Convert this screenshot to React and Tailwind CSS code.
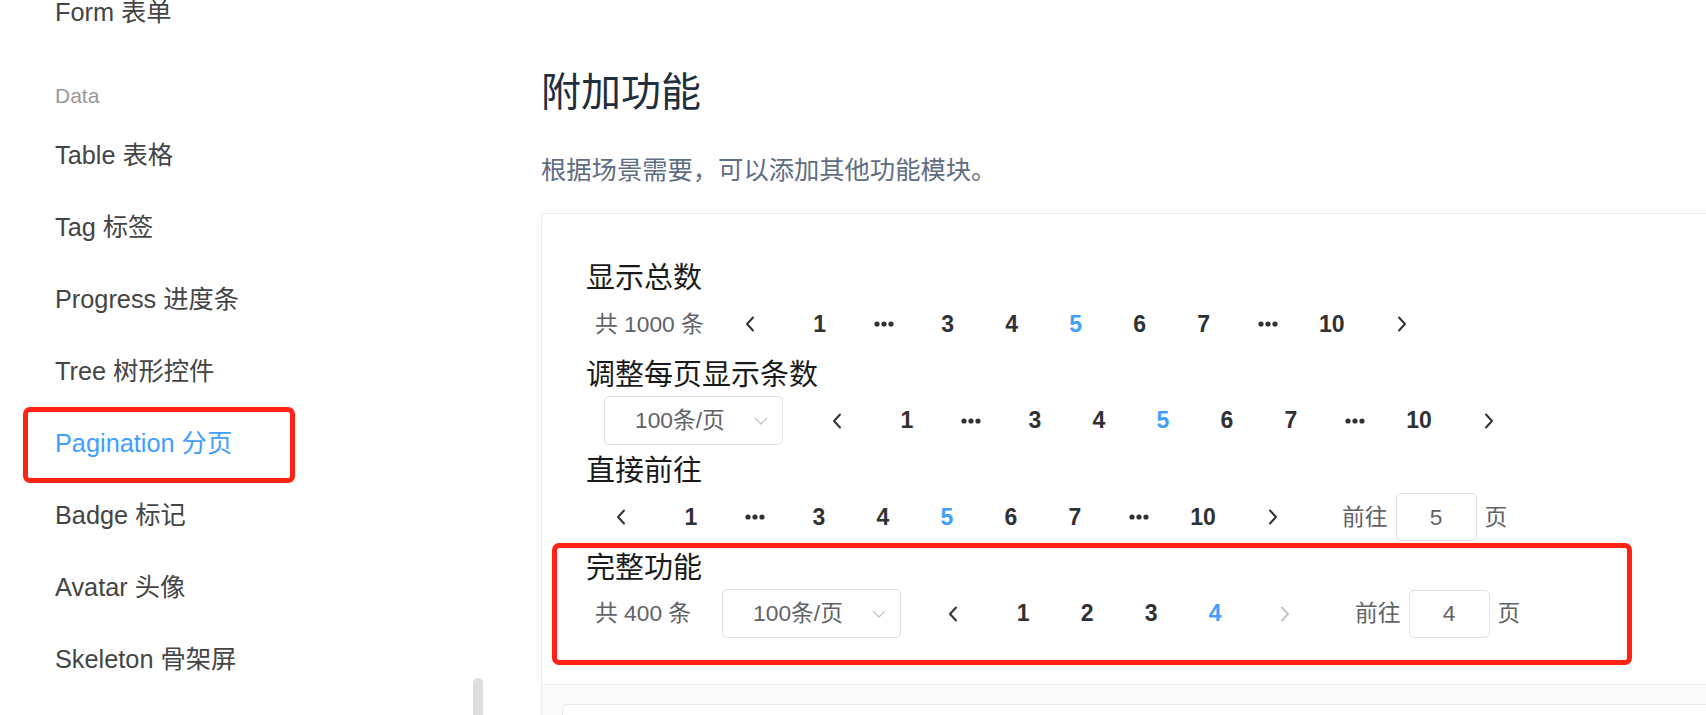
import React from "react";

const FONT = "font-['Liberation_Sans','Noto_Sans_CJK_SC',sans-serif]";

const navItems = [
    { label: "Table 表格" },
    { label: "Tag 标签" },
    { label: "Progress 进度条" },
    { label: "Tree 树形控件" },
    { label: "Pagination 分页", active: true },
    { label: "Badge 标记" },
    { label: "Avatar 头像" },
    { label: "Skeleton 骨架屏" },
];

const Chevron = ({ dir = "left", disabled = false }) => (
    <svg
        width="10"
        height="16"
        viewBox="0 0 10 16"
        fill="none"
        stroke={disabled ? "#c0c4cc" : "#303133"}
        strokeWidth="2"
        strokeLinecap="round"
        strokeLinejoin="round"
    >
        <polyline points={dir === "left" ? "8,1.5 2,8 8,14.5" : "2,1.5 8,8 2,14.5"} />
    </svg>
);

const MoreDots = () => (
    <svg width="20" height="6" viewBox="0 0 20 6" fill="#303133">
        <circle cx="3" cy="3" r="2.6" />
        <circle cx="10" cy="3" r="2.6" />
        <circle cx="17" cy="3" r="2.6" />
    </svg>
);

const Pager = ({ pages, active }) => (
    <ul className="flex">
        {pages.map((p, i) => (
            <li
                key={i}
                className={`w-[64px] h-[49px] flex items-center justify-center text-[23px] font-bold ${
                    p === active ? "text-[#409eff]" : "text-[#303133]"
                }`}
            >
                {p === "more" ? <MoreDots /> : p}
            </li>
        ))}
    </ul>
);

const Prev = ({ className = "" }) => (
    <button className={`w-[52px] h-[49px] mr-[12px] flex items-center justify-center ${className}`}>
        <Chevron dir="left" />
    </button>
);

const Next = ({ disabled = false }) => (
    <button className="w-[52px] h-[49px] ml-[12px] flex items-center justify-center">
        <Chevron dir="right" disabled={disabled} />
    </button>
);

const SizeSelect = ({ className = "" }) => (
    <div
        className={`w-[179px] h-[49px] border border-[#dcdfe6] rounded-[5px] flex items-center pl-[30px] pr-[14px] text-[22.75px] text-[#606266] ${className}`}
    >
        <span className="flex-1">100条/页</span>
        <svg width="14" height="8" viewBox="0 0 14 8" fill="none" stroke="#c0c4cc" strokeWidth="1.3">
            <polyline points="1,1 7,7 13,1" />
        </svg>
    </div>
);

const Jumper = ({ value, className = "" }) => (
    <div className={`flex items-center text-[22.75px] text-[#606266] ${className}`}>
        <span>前往</span>
        <div className="mx-[8px] w-[81px] h-[48px] border border-[#dcdfe6] rounded-[5px] flex items-center justify-center">
            {value}
        </div>
        <span>页</span>
    </div>
);

const Block = ({ title, children }) => (
    <div className="mb-[4.5px]">
        <div className="text-[29px] leading-[36px] text-[#1a1a1a]">{title}</div>
        <div className="py-[3.5px] pl-[9px] flex items-center">{children}</div>
    </div>
);

const longPages = ["1", "more", "3", "4", "5", "6", "7", "more", "10"];

export default function App() {
    return (
        <div className={`h-[715px] w-full overflow-hidden bg-white flex ${FONT}`}>
            {/* Sidebar */}
            <aside className="relative w-[491px] shrink-0">
                <div className="-mt-[23px]">
                    <div className="h-[72px] flex items-center pl-[55px] text-[25.3px] text-[#444]">
                        Form 表单
                    </div>
                    <div className="h-[71px] pt-[35px] pl-[55px] text-[21px] leading-[24px] text-[#999]">
                        Data
                    </div>
                    {navItems.map((item) => (
                        <div
                            key={item.label}
                            className={`relative h-[72px] flex items-center pl-[55px] text-[25.3px] ${
                                item.active ? "text-[#409eff]" : "text-[#444]"
                            }`}
                        >
                            {item.label}
                            {item.active && (
                                <div className="absolute -top-[1px] left-[23px] w-[272px] h-[76px] border-[5px] border-[#ff2314] rounded-[7px]" />
                            )}
                        </div>
                    ))}
                </div>
                {/* scrollbar thumb */}
                <div className="absolute left-[473px] top-[678px] w-[10px] h-[60px] rounded-full bg-[#dddee0]" />
            </aside>

            {/* Main content */}
            <main className="flex-1 min-w-0 overflow-hidden pl-[50px] pt-[68px]">
                <h3 className="text-[40px] leading-[48px] text-[#1f2f3d]">附加功能</h3>
                <p className="mt-[37px] text-[25.3px] leading-[34px] text-[#5e6d82]">
                    根据场景需要，可以添加其他功能模块。
                </p>

                <div className="relative mt-[26px] w-[1300px] border border-[#ebebeb] rounded-[5px]">
                    <div className="pt-[46px] pl-[44px] pb-[38px]">
                        <Block title="显示总数">
                            <span className="mr-[20px] text-[22.75px] text-[#606266]">共 1000 条</span>
                            <Prev />
                            <Pager pages={longPages} active="5" />
                            <Next />
                        </Block>

                        <Block title="调整每页显示条数">
                            <SizeSelect className="ml-[9px] mr-[28px]" />
                            <Prev />
                            <Pager pages={longPages} active="5" />
                            <Next />
                        </Block>

                        <Block title="直接前往">
                            <Prev />
                            <Pager pages={longPages} active="5" />
                            <Next />
                            <Jumper value="5" className="ml-[43px]" />
                        </Block>

                        <Block title="完整功能">
                            <span className="mr-[31px] text-[22.75px] text-[#606266]">共 400 条</span>
                            <SizeSelect className="mr-[26px]" />
                            <Prev />
                            <Pager pages={["1", "2", "3", "4"]} active="4" />
                            <Next disabled />
                            <Jumper value="4" className="ml-[44px]" />
                        </Block>
                    </div>

                    {/* code / meta area */}
                    <div className="border-t border-[#eaeefb] bg-[#fafafa] pt-[19px] pl-[20px]">
                        <div className="h-[60px] bg-white border border-[#e6e8eb] rounded-[5px]" />
                    </div>

                    {/* highlight annotation */}
                    <div className="absolute left-[10px] top-[329px] w-[1080px] h-[122px] border-[5px] border-[#ff2314] rounded-[7px]" />
                </div>
            </main>
        </div>
    );
}
